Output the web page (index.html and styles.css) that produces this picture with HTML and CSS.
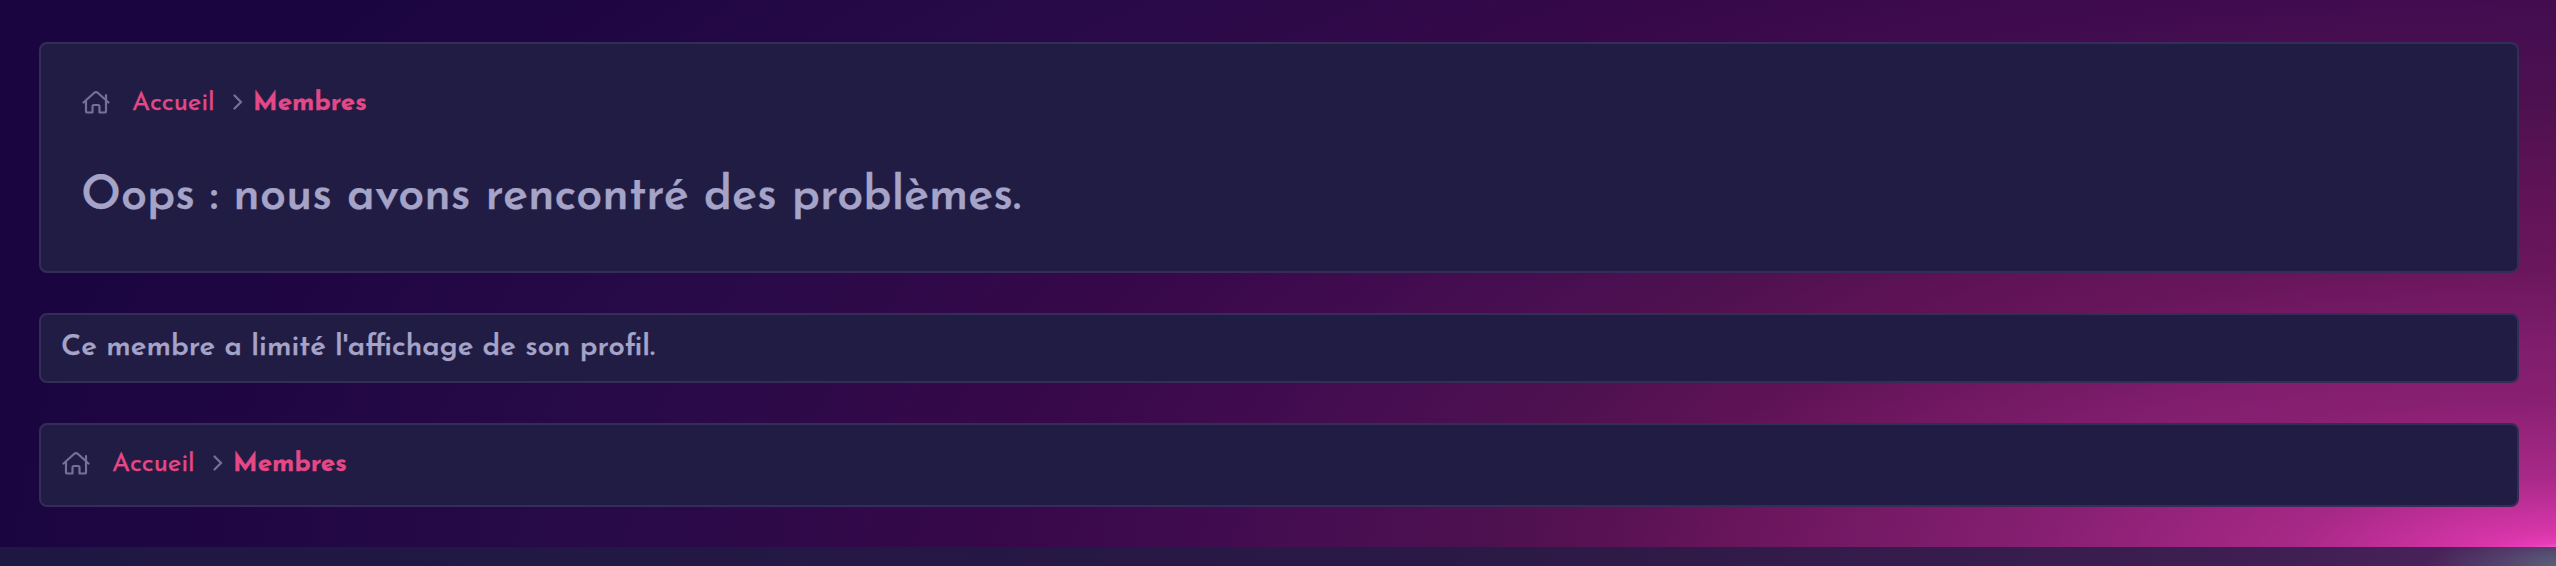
FILE: index.html
```
<!DOCTYPE html>
<html lang="fr">
<head>
  <meta charset="UTF-8">
  <meta name="viewport" content="width=device-width, initial-scale=1.0">
  <title>Membres</title>
  <link rel="stylesheet" href="styles.css">
</head>
<body>
  <main class="page">
    <header class="panel page-header">
      <nav class="breadcrumb">
        <svg class="icon-home" viewBox="0 0 28 24">
          <path d="M1.5 12.5 L12 3 Q14 1.2 16 3 L26.500 12.500 M4 11 V21 Q4 22.500 5.500 22.500 H10.500 V16.500 Q10.500 15 12 15 H16 Q17.500 15 17.500 16.500 V22.500 H22.500 Q24 22.500 24 21 V5" />
        </svg>
        <a class="crumb-home" href="#">Accueil</a>
        <svg class="icon-next" viewBox="0 0 10 16">
          <polyline points="1.500 1.500 8 8 1.500 14.500" />
        </svg>
        <a class="crumb-current" href="#">Membres</a>
      </nav>
      <h1 class="title">Oops : nous avons rencontré des problèmes.</h1>
    </header>

    <section class="panel message">
      <p class="message-text">Ce membre a limité l'affichage de son profil.</p>
    </section>

    <section class="panel bottom-nav">
      <nav class="breadcrumb">
        <svg class="icon-home" viewBox="0 0 28 24">
          <path d="M1.5 12.5 L12 3 Q14 1.2 16 3 L26.500 12.500 M4 11 V21 Q4 22.500 5.500 22.500 H10.500 V16.500 Q10.500 15 12 15 H16 Q17.500 15 17.500 16.500 V22.500 H22.500 Q24 22.500 24 21 V5" />
        </svg>
        <a class="crumb-home" href="#">Accueil</a>
        <svg class="icon-next" viewBox="0 0 10 16">
          <polyline points="1.500 1.500 8 8 1.500 14.500" />
        </svg>
        <a class="crumb-current" href="#">Membres</a>
      </nav>
    </section>
  </main>

  <footer class="footer"></footer>
</body>
</html>
```
FILE: styles.css
```
* {
  margin: 0;
  padding: 0;
  box-sizing: border-box;
}

body {
  height: 566px;
  display: flex;
  flex-direction: column;
  overflow: hidden;
  font-family: "Josefin Sans", Lato, sans-serif;
  color: #a5a3c8;
  -webkit-text-stroke: 0.25px;
  /* pink glow in the corner over the wide purple gradient */
  background:
    radial-gradient(950px 290px at 2566px 560px,
      rgba(250, 170, 222, 1) 0%,
      rgba(232, 60, 184, 1) 6%,
      rgba(230, 58, 180, 0.86) 10%,
      rgba(230, 58, 180, 0.72) 16%,
      rgba(230, 58, 180, 0.43) 29%,
      rgba(230, 58, 180, 0.17) 55%,
      rgba(230, 58, 180, 0) 100%),
    radial-gradient(2556px 1080px at 2566px 560px,
      #7c1c66 0%,
      #741a64 20%,
      #611357 33.5%,
      #4e1150 42%,
      #430d50 51%,
      #37084a 61%,
      #280a48 77%,
      #1b0541 100%);
}

.page {
  height: 547px;
  padding: 42px 37px 40px 39px;
  display: flex;
  flex-direction: column;
  gap: 40px;
}

.panel {
  background: #211c43;
  border: 2px solid #332d58;
  border-radius: 8px;
}

.page-header {
  height: 231px;
  padding: 40px 42px;
}

.breadcrumb {
  height: 36px;
  display: flex;
  align-items: center;
  white-space: nowrap;
}

.icon-home {
  width: 28px;
  height: 24px;
  margin-left: -1px;
  fill: none;
  stroke: #757099;
  stroke-width: 2.2;
  stroke-linecap: round;
  stroke-linejoin: round;
}

.icon-next {
  width: 10px;
  height: 16px;
  margin: 0 10px 0 19px;
  fill: none;
  stroke: #757099;
  stroke-width: 2.2;
  stroke-linecap: round;
}

.crumb-home,
.crumb-current {
  color: #e44886;
  text-decoration: none;
  font-size: 26px;
  line-height: 36px;
}

.crumb-home {
  width: 82px;
  margin-left: 22px;
  padding-top: 4px;
}

.crumb-current {
  padding-top: 3px;
  font-weight: 700;
}

.title {
  margin: 43px 0 0 -2px;
  font-size: 46.8px;
  font-weight: 600;
  line-height: 70px;
  white-space: nowrap;
}

.message {
  height: 70px;
  padding: 13px 20px;
}

.message-text {
  font-size: 29.25px;
  font-weight: 600;
  line-height: 40px;
  white-space: nowrap;
}

.bottom-nav {
  height: 84px;
  padding: 20px 22px;
}

.footer {
  height: 19px;
  background:
    radial-gradient(130px 34px at 100% 100%, rgba(90, 103, 125, 0.8), rgba(90, 103, 125, 0)),
    rgba(33, 28, 68, 0.77);
}
```
